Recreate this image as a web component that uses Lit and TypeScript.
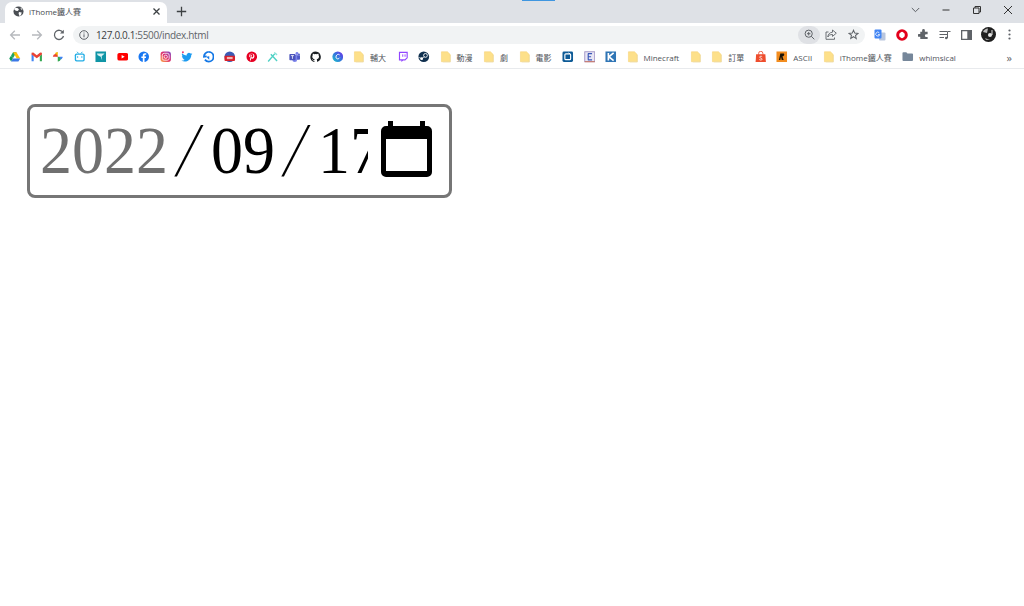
import { LitElement, html, css, svg } from "lit";
import { customElement } from "lit/decorators.js";

const ic = (body: unknown, vb = "0 0 12 12") => html`<svg class="fav" viewBox=${vb}>${body}</svg>`;
const folder = svg`<path d="M1.500 .8h6.300l2.900 2.900v7.500H1.500z" fill="#fde08a" stroke="#f6d47a" stroke-width=".6"/><path d="M10.800 4.200v7.300H3" fill="none" stroke="#e9d9a8" stroke-width=".6"/>`;
const greyFolder = svg`<path d="M.5 2.200c0-.6.4-1 1-1h3l1.200 1.300h4.800c.6 0 1 .4 1 1v6c0 .6-.4 1-1 1h-9c-.6 0-1-.4-1-1z" fill="#76879a"/>`;

const favs: Record<string, unknown> = {
  drive: svg`<path d="M4.200 1.200h3.600L4 7.800 2.200 4.700z" fill="#1fa463"/><path d="M7.800 1.200l3.900 6.600H8.100L4.200 1.200z" fill="#ffc107"/><path d="M.3 7.800L2.200 4.700 4 7.800l-1.800 3.200z" fill="#0f9d58"/><path d="M4 7.800h7.700L9.800 11H2.200z" fill="#3b78e7"/>`,
  gmail: svg`<path d="M.6 3v7.600h2.200V5.200z" fill="#4285f4"/><path d="M9.200 5.200v5.400h2.200V3z" fill="#34a853"/><path d="M.6 1.800v1.900L6 7.600l5.400-3.900V1.800L9.600 1.600 6 4.400 2.400 1.600z" fill="#ea4335"/>`,
  photos: svg`<path d="M6 6V1h-.5A2.700 2.700 0 0 0 3 3.600 3 3 0 0 0 6 6z" fill="#f4b400"/><path d="M6 6h5v.5A2.700 2.700 0 0 1 8.400 9 3 3 0 0 1 6 6z" fill="#4285f4"/><path d="M6 6v5h.5A2.700 2.700 0 0 0 9 8.400 3 3 0 0 0 6 6z" fill="#34a853"/><path d="M6 6H1v-.5A2.700 2.700 0 0 1 3.600 3 3 3 0 0 1 6 6z" fill="#ea4335"/>`,
  bili: svg`<rect x=".8" y="2.600" width="10.400" height="8.400" rx="1.800" fill="#23ade5"/><rect x="2.200" y="4" width="7.600" height="5.600" rx=".8" fill="#fff"/><path d="M3.200 .8l1.600 1.800M8.800 .8L7.200 2.600" stroke="#23ade5" stroke-width="1"/><path d="M3.800 5.600v1.400M8.200 5.600v1.400" stroke="#23ade5" stroke-width="1.100"/>`,
  teal: svg`<rect x=".5" y=".5" width="11" height="11" fill="#0f95a6"/><path d="M2 2.500h8L7 5.500 7.500 10 6 6 2.800 4.500z" fill="#d8f2f4"/>`,
  yt: svg`<rect x=".4" y="2" width="11.200" height="8" rx="2" fill="#f00"/><path d="M4.800 4.200v3.600L8 6z" fill="#fff"/>`,
  fb: svg`<circle cx="6" cy="6" r="5.500" fill="#1877f2"/><path d="M6.800 11.500V7.400h1.400l.3-1.700H6.800V4.800c0-.5.2-.9 1-.9h.8V2.500s-.7-.1-1.400-.1c-1.400 0-2.200.8-2.200 2.300v1H3.500v1.700H5v4.100z" fill="#fff"/>`,
  ig: svg`<defs><linearGradient id="g" x1="0" y1="1" x2="1" y2="0"><stop offset="0" stop-color="#fdb14b"/><stop offset=".5" stop-color="#e1306c"/><stop offset="1" stop-color="#7a4bc9"/></linearGradient></defs><rect x=".6" y=".6" width="10.800" height="10.800" rx="2.800" fill="url(#g)"/><rect x="2.400" y="2.400" width="7.200" height="7.200" rx="2" fill="none" stroke="#fff" stroke-width=".8"/><circle cx="6" cy="6" r="1.700" fill="none" stroke="#fff" stroke-width=".8"/>`,
  tw: svg`<path d="M11.500 2.900c-.4.2-.8.3-1.300.4.500-.3.800-.7 1-1.200-.4.300-.9.500-1.400.6a2.300 2.300 0 0 0-3.900 2.100C4 4.700 2.300 3.800 1.200 2.400c-.6 1-.3 2.300.7 3-.4 0-.7-.1-1-.3 0 1.100.8 2.100 1.800 2.300-.3.100-.7.100-1 0 .3.900 1.100 1.600 2.100 1.600-.9.800-2.200 1.100-3.400 1 1.100.7 2.300 1 3.600 1 4.300 0 6.800-3.700 6.700-6.900.4-.3.800-.7 1.100-1.200z" fill="#1d9bf0"/><circle cx="2" cy="1.300" r="1" fill="#e8336e"/>`,
  q: svg`<path d="M6 1a5 5 0 0 1 5 5 5 5 0 0 1-5 5 5 5 0 0 1-4-2" fill="none" stroke="#1478e6" stroke-width="1.900"/><path d="M6 1a5 5 0 0 0-5 5l2.800-.4" fill="none" stroke="#1478e6" stroke-width="1.900"/><path d="M3.500 6l3 3V5.500z" fill="#1478e6"/>`,
  red: svg`<circle cx="6" cy="6" r="5.500" fill="#3c5bb5"/><rect x=".5" y="5" width="11" height="5.500" rx="1" fill="#d8202b"/><rect x="3" y="6.200" width="6" height="2.300" fill="#f2b6b6"/>`,
  pin: svg`<circle cx="6" cy="6" r="5.500" fill="#e60023"/><path d="M6.200 2.500C4.200 2.500 3.200 3.800 3.200 5c0 .7.300 1.300.8 1.500l.3-.7c-.3-.3-.4-.6-.4-.9 0-1 .8-1.700 2-1.700 1.100 0 1.700.7 1.700 1.600 0 1.100-.5 2.100-1.300 2.100-.4 0-.7-.4-.6-.8l.4-1.500c0-.4-.2-.7-.6-.7-.5 0-.8.500-.8 1.100l.2.700-.8 3.300.2 1.400.9-1.600.3-1.300c.2.300.6.500 1 .500 1.400 0 2.300-1.300 2.300-2.900 0-1.400-1.100-2.600-2.800-2.600z" fill="#fff"/>`,
  x: svg`<path d="M1.200 11L8 3M4 3.500l6.500 7" stroke="#4fd1c5" stroke-width="1.500" fill="none"/><path d="M7.500 1.500l3 2.500" stroke="#8be3da" stroke-width="1.500"/>`,
  teams: svg`<circle cx="8.300" cy="2.600" r="1.500" fill="#7b83eb"/><circle cx="10.400" cy="3.600" r="1" fill="#5059c9"/><rect x="6" y="4.400" width="5.600" height="4.600" rx="1" fill="#5059c9"/><path d="M3.500 4.400h5V9a2.500 2.500 0 0 1-5 0z" fill="#7b83eb"/><rect x=".4" y="3.200" width="6.400" height="6.400" rx=".7" fill="#4b53bc"/><path d="M2 4.800h3.200M3.600 4.800v3.400" stroke="#fff" stroke-width=".8"/>`,
  gh: svg`<path d="M6 .5A5.600 5.600 0 0 0 4.200 11.400c.3 0 .4-.1.400-.3v-1c-1.500.3-1.900-.7-1.900-.7-.3-.7-.6-.8-.6-.8-.5-.3 0-.3 0-.3.500 0 .8.500.8.500.5.800 1.300.6 1.700.5 0-.4.200-.6.300-.8-1.200-.1-2.500-.6-2.500-2.700 0-.6.200-1.100.6-1.500-.1-.1-.3-.7 0-1.500 0 0 .5-.1 1.500.6a5.300 5.300 0 0 1 2.800 0c1-.7 1.500-.6 1.500-.6.300.8.100 1.400 0 1.500.4.400.6.900.6 1.500 0 2.100-1.300 2.600-2.500 2.700.2.200.4.500.4 1v1.500c0 .2.100.3.400.3A5.600 5.600 0 0 0 6 .5z" fill="#1b1f23"/>`,
  canva: svg`<defs><linearGradient id="c" x1="0" y1="1" x2="1" y2="0"><stop offset="0" stop-color="#16c7c9"/><stop offset=".6" stop-color="#3d66e0"/><stop offset="1" stop-color="#7d2ae8"/></linearGradient></defs><circle cx="6" cy="6" r="5.600" fill="url(#c)"/><path d="M8 4.200C7.500 3.300 6 3.200 5 4.200s-1.200 3 0 3.800c1 .6 2.300 0 3-1" fill="none" stroke="#fff" stroke-width="1"/>`,
  twitch: svg`<path d="M2 .8h9.200v6.400L8.600 9.800H6.400L4.600 11.500V9.800H2z" fill="#9146ff"/><path d="M3.200 2h6.800v4.700L8.200 8.500H3.200z" fill="#fff"/><path d="M6 3.500v2.500M8.400 3.500v2.500" stroke="#9146ff" stroke-width="1"/>`,
  steam: svg`<circle cx="6" cy="6" r="5.600" fill="#10304f"/><circle cx="7.800" cy="4.600" r="2" fill="none" stroke="#fff" stroke-width=".9"/><circle cx="3.800" cy="8" r="1.500" fill="#fff"/><path d="M.5 6.500l3.300 1.500 3-2" stroke="#fff" stroke-width=".7" fill="none"/>`,
  db: svg`<rect x=".5" y=".5" width="11" height="11" rx="1.500" fill="#0d5a96"/><rect x="3" y="3" width="6" height="6" rx="1" fill="none" stroke="#fff" stroke-width="1.200"/><path d="M7 1.800L9 3.800" stroke="#fff" stroke-width="1"/>`,
  e: svg`<rect x=".8" y=".8" width="10.400" height="10.400" fill="#e9e7f5" stroke="#9a8cc0" stroke-width=".9"/><path d="M4 2.800h4.400M4.400 2.800v6.400M4 9.200h4.400M4.400 6h3" stroke="#3a58b8" stroke-width="1.200" fill="none"/><path d="M.8 11.200h10.400" stroke="#d06a4a" stroke-width=".9"/>`,
  k: svg`<rect x=".5" y=".5" width="11" height="11" fill="#2f75b5"/><path d="M3.500 2v8M9 2L4 6l5 4" stroke="#fff" stroke-width="1.700" fill="none"/>`,
  shopee: svg`<path d="M1.200 3.500h9.600l.6 8H.6z" fill="#ee4d2d"/><path d="M3.800 4V2.500a2.200 2.200 0 0 1 4.400 0V4" fill="none" stroke="#ee4d2d" stroke-width=".9"/><path d="M7.500 6C7 5.300 4.800 5.200 4.800 6.400c0 1.300 2.600.8 2.600 2.200 0 1.200-2.300 1.100-3 .2" fill="none" stroke="#fff" stroke-width=".8"/>`,
  r: svg`<rect x=".5" y=".5" width="11" height="11" fill="#f28c1e"/><path d="M4.500 2.500h3.200c1.300 0 1.400 2.800-1 3l1.300 3.800H6L5.200 6 4.500 9.300H3z" fill="#1a1206"/>`,
};

type Bm = { k: string; t?: string };
const marks: Bm[] = [
  { k: "drive" }, { k: "gmail" }, { k: "photos" }, { k: "bili" }, { k: "teal" }, { k: "yt" }, { k: "fb" }, { k: "ig" },
  { k: "tw" }, { k: "q" }, { k: "red" }, { k: "pin" }, { k: "x" }, { k: "teams" }, { k: "gh" }, { k: "canva" },
  { k: "folder", t: "輔大" }, { k: "twitch" }, { k: "steam" }, { k: "folder", t: "動漫" }, { k: "folder", t: "劇" },
  { k: "folder", t: "電影" }, { k: "db" }, { k: "e" }, { k: "k" }, { k: "folder", t: "Minecraft" }, { k: "folder" },
  { k: "folder", t: "訂單" }, { k: "shopee" }, { k: "r", t: "ASCII" }, { k: "folder", t: "iThome鐵人賽" }, { k: "grey", t: "whimsical" },
];

@customElement("app-root")
export class AppRoot extends LitElement {
  static styles = css`
    :host { display: block; height: 606px; background: #fff; font-family: "Open Sans", "Noto Sans", "Noto Sans CJK TC", sans-serif; overflow: hidden; position: relative; }
    svg { display: block; flex: none; }
    .strip { height: 23px; background: #dee1e6; display: flex; align-items: flex-end; position: relative; padding-left: 5px; }
    .blue { position: absolute; left: 522px; top: 0; width: 33px; height: 1px; background: #3f96e0; }
    .tab { width: 162px; height: 21px; background: #fff; border-radius: 7px 7px 0 0; display: flex; align-items: center; padding: 0 6px 3px 8px; box-sizing: border-box; gap: 5px; font-size: 8px; color: #45494e; }
    .tab .title { flex: 1; white-space: nowrap; }
    .plus { margin: 0 0 6px 9px; }
    .win { margin-left: auto; align-self: flex-start; margin-top: 5px; display: flex; align-items: center; padding-right: 11px; gap: 21px; }
    .bar { height: 23px; display: flex; align-items: center; padding-left: 9px; background: #fff; }
    .nav { display: flex; gap: 10px; align-items: center; }
    .omni { margin-left: 8px; width: 792px; height: 18px; border-radius: 9px; background: #f1f3f4; display: flex; align-items: center; padding: 0 1px 0 6px; box-sizing: border-box; }
    .url { margin-left: 7px; font-size: 10px; color: #5f6368; flex: 1; font-family: "Open Sans", sans-serif; letter-spacing: -.035em; white-space: nowrap; }
    .url b { font-weight: 400; color: #3c4043; }
    .pill { width: 22px; height: 18px; border-radius: 9px; background: #dfe1e5; display: flex; align-items: center; justify-content: center; }
    .act { width: 22px; display: flex; justify-content: center; }
    .exts { margin-left: 4px; display: flex; align-items: center; }
    .exts > * { width: 21.700px; display: flex; justify-content: center; }
    .marks { height: 22px; display: flex; align-items: center; padding-left: 4px; border-bottom: 1px solid #e8eaed; position: relative; }
    .bm { display: flex; align-items: center; gap: 5.500px; padding: 0 5px; font-size: 8px; color: #50545a; white-space: nowrap; }
    .bm.txt { padding-right: 5.500px; }
    .fav { width: 11.500px; height: 11.500px; }
    .more { margin-left: auto; margin-right: 12px; font-size: 11px; color: #5f6368; }
    .page { padding: 35px 0 0 27px; }
    .box { display: inline-flex; align-items: center; height: 94px; box-sizing: border-box; border: 3px solid #767676; border-radius: 8px; padding: 0 17px 0 10px; background: #fff; }
    .field { width: 328px; height: 88px; overflow: hidden; display: flex; align-items: baseline; font-family: "Liberation Serif", serif; font-size: 64px; line-height: 88px; color: #000; transform: scaleY(1.07); transform-origin: 50% 52%; margin-right: 13px; }
    .year { color: #707070; }
    .sl { width: 43px; flex: none; text-align: center; font-family: Roboto, sans-serif; font-weight: 100; font-size: 63px; transform: scaleX(1.42); }
    .cal { margin-top: -4px; }
  `;

  render() {
    return html`
      <div class="strip">
        <div class="blue"></div>
        <div class="tab">
          <svg width="11" height="11" viewBox="0 0 12 12"><circle cx="6" cy="6" r="5.500" fill="#4a4e53"/><path d="M3 1.800l2.500.6 1 1.700-1.500 1.400-2-.4-2-1.800zM6.500 6.500l3 .5-.8 3-1.800.8-.8-2.500zM8 1.500l2.500 2-1.500.5z" fill="#fff"/></svg>
          <span class="title">iThome鐵人賽</span>
          <svg width="9" height="9" viewBox="0 0 9 9"><path d="M1.500 1.500l6 6M7.500 1.500l-6 6" stroke="#3c4043" stroke-width="1.300"/></svg>
        </div>
        <svg class="plus" width="11" height="11" viewBox="0 0 11 11"><path d="M5.500 .8v9.400M.8 5.500h9.400" stroke="#3c4043" stroke-width="1.300"/></svg>
        <div class="win">
          <svg width="9" height="6" viewBox="0 0 9 6"><path d="M.8 1l3.700 3.700L8.200 1" fill="none" stroke="#5a5e63" stroke-width="1"/></svg>
          <svg width="10" height="10" viewBox="0 0 10 10"><path d="M1.500 5h7" stroke="#333" stroke-width="1"/></svg>
          <svg width="10" height="10" viewBox="0 0 10 10"><path d="M1.500 3h5.500v5.500H1.500zM3 3V1.500h5.500V7H7" fill="none" stroke="#333" stroke-width="1"/></svg>
          <svg width="10" height="10" viewBox="0 0 10 10"><path d="M1 1l8 8M9 1l-8 8" stroke="#333" stroke-width="1"/></svg>
        </div>
      </div>
      <div class="bar">
        <div class="nav">
          <svg width="12" height="12" viewBox="0 0 12 12"><path d="M11 6H1.800M5.800 1.800L1.600 6l4.200 4.200" fill="none" stroke="#b6b9bd" stroke-width="1.300"/></svg>
          <svg width="12" height="12" viewBox="0 0 12 12"><path d="M1 6h9.200M6.200 1.800L10.400 6l-4.200 4.200" fill="none" stroke="#b6b9bd" stroke-width="1.300"/></svg>
          <svg width="12" height="12" viewBox="0 0 12 12"><path d="M10 3.500A4.600 4.600 0 1 0 10.500 7" fill="none" stroke="#5f6368" stroke-width="1.300"/><path d="M10.800 .8v3.800H7z" fill="#5f6368"/></svg>
        </div>
        <div class="omni">
          <svg width="10" height="10" viewBox="0 0 10 10"><circle cx="5" cy="5" r="4.300" fill="none" stroke="#5f6368" stroke-width="1"/><path d="M5 4.300v3M5 2.500v1" stroke="#5f6368" stroke-width="1"/></svg>
          <span class="url"><b>127.0.0.1</b>:5500/index.html</span>
          <div class="pill"><svg width="11" height="11" viewBox="0 0 11 11"><circle cx="4.700" cy="4.700" r="3.600" fill="none" stroke="#5f6368" stroke-width="1"/><path d="M7.300 7.300l3 3M3 4.700h3.400M4.700 3v3.400" stroke="#5f6368" stroke-width="1"/></svg></div>
          <div class="act"><svg width="12" height="11" viewBox="0 0 12 11"><path d="M7.500 1l3.800 3.200-3.800 3.200V5.500C5 5.500 3.700 6.300 2.800 8c.3-2.800 1.800-4.500 4.700-4.800z" fill="none" stroke="#5f6368" stroke-width=".9"/><path d="M9.500 8.500v1.800H1V3h2.500" fill="none" stroke="#5f6368" stroke-width=".9"/></svg></div>
          <div class="act"><svg width="11" height="11" viewBox="0 0 12 12"><path d="M6 1.300l1.400 3.200 3.500.3-2.700 2.300.8 3.400L6 8.400 3 10.200l.8-3.400L1.100 4.800l3.500-.3z" fill="none" stroke="#5f6368" stroke-width="1.100"/></svg></div>
        </div>
        <div class="exts">
          <span><svg width="12" height="12" viewBox="0 0 12 12"><rect x="5" y="3.500" width="6.500" height="8" rx="1" fill="#b9c6de"/><rect x=".5" y=".5" width="7" height="9" rx="1" fill="#4285f4"/><path d="M5.300 3.800a2 2 0 1 0 .4 1.800H4" fill="none" stroke="#fff" stroke-width=".8"/></svg></span>
          <span><svg width="12" height="12" viewBox="0 0 12 12"><circle cx="6" cy="6" r="4.300" fill="none" stroke="#e3001b" stroke-width="3"/><ellipse cx="6" cy="6" rx="1.500" ry="3.300" fill="#fff"/></svg></span>
          <span><svg width="11" height="11" viewBox="0 0 12 12"><path d="M4.500 1.500a1.500 1.500 0 0 1 3 0V3h3v2.800H9a1.500 1.500 0 0 0 0 3h1.500V11h-8V8.500H1a1.500 1.500 0 0 1 0-3h1.500V3h2z" fill="#5f6368"/></svg></span>
          <span><svg width="12" height="10" viewBox="0 0 12 10"><path d="M.5 1.500h7.500M.5 4.500h7.500M.5 7.500h4.500" stroke="#5f6368" stroke-width="1"/><path d="M8.500 8V1.500h3" fill="none" stroke="#5f6368" stroke-width="1"/><circle cx="7.300" cy="8" r="1.300" fill="#5f6368"/></svg></span>
          <span><svg width="11" height="10" viewBox="0 0 11 10"><path fill-rule="evenodd" d="M0 0h11v10H0zM1.300 1.300v7.400h5V1.300z" fill="#5f6368"/></svg></span>
          <span><svg width="15" height="15" viewBox="0 0 15 15"><circle cx="7.500" cy="7.500" r="7.500" fill="#1f1f1f"/><path d="M2 5a6 6 0 0 1 5-3.500L6 6z" fill="#bbb"/><circle cx="9" cy="8" r="2" fill="#e8e8e8"/><path d="M11 3v5" stroke="#e8e8e8" stroke-width="1"/><path d="M4 11l5 2-4 0z" fill="#999"/></svg></span>
          <span><svg width="3" height="11" viewBox="0 0 3 11"><circle cx="1.500" cy="1.500" r="1.100" fill="#5f6368"/><circle cx="1.500" cy="5.500" r="1.100" fill="#5f6368"/><circle cx="1.500" cy="9.500" r="1.100" fill="#5f6368"/></svg></span>
        </div>
      </div>
      <div class="marks">
        ${marks.map((m) => html`<div class="bm ${m.t ? "txt" : ""}">
          ${ic(m.k === "folder" ? folder : m.k === "grey" ? greyFolder : favs[m.k])}${m.t ? html`<span>${m.t}</span>` : ""}
        </div>`)}
        <span class="more">»</span>
      </div>
      <div class="page">
        <div class="box">
          <div class="field">
            <span class="year">2022</span><span class="sl">/</span><span>09</span><span class="sl">/</span><span>17</span>
          </div>
          <svg class="cal" width="51" height="56" viewBox="0 0 51 56">
            <path fill-rule="evenodd" d="M7 0h5v5h27V0h5v5h2a5 5 0 0 1 5 5v41a5 5 0 0 1-5 5H5a5 5 0 0 1-5-5V10a5 5 0 0 1 5-5h2zM5 18v32h41V18z" fill="#000"/>
          </svg>
        </div>
      </div>
    `;
  }
}
